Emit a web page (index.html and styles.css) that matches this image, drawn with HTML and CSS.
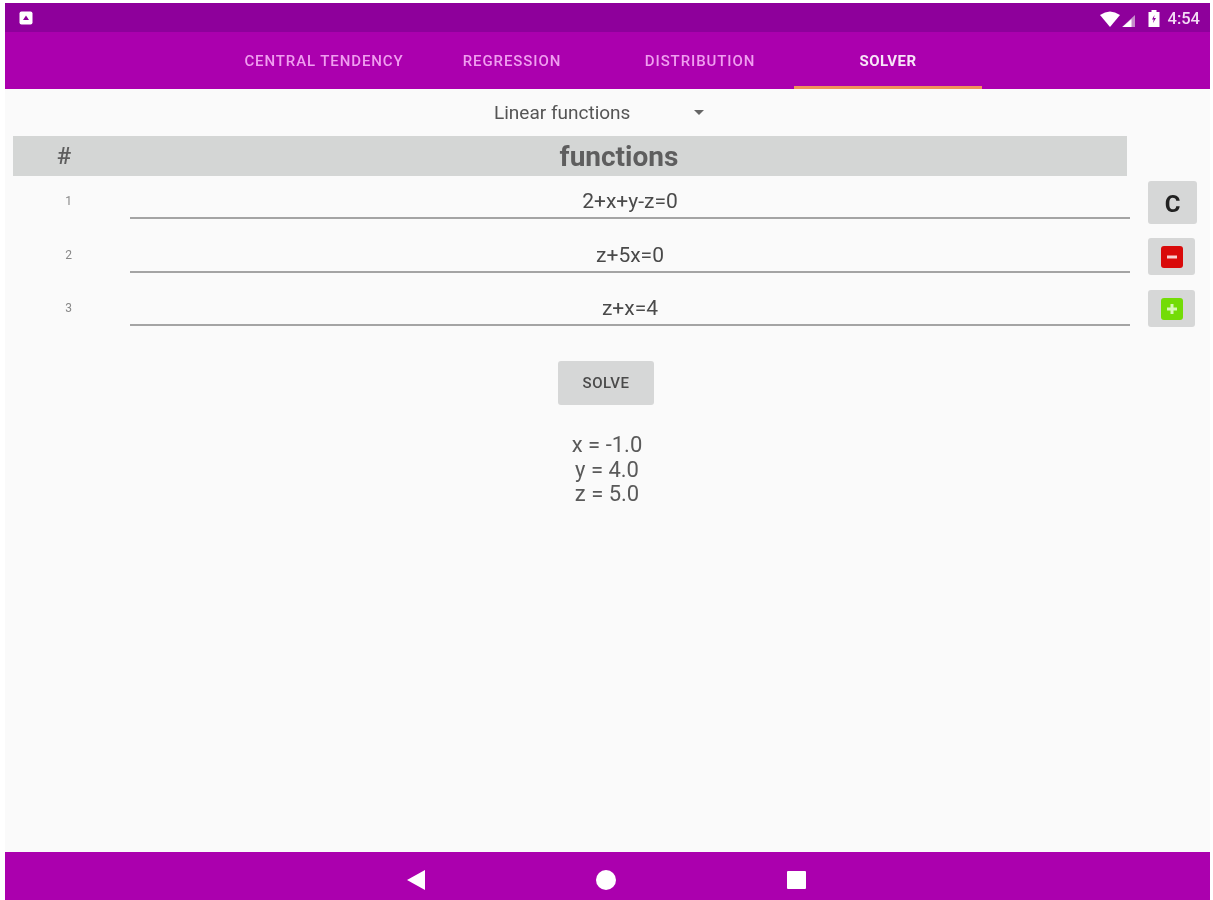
FILE: index.html
```html
<!DOCTYPE html>
<html lang="en">
<head>
<meta charset="utf-8">
<title>Solver</title>
<link rel="stylesheet" href="styles.css">
</head>
<body>
<div class="screen">
  <div class="status">
    <svg class="notif" width="14" height="14" viewBox="0 0 14 14"><rect x="0.5" y="0.5" width="13" height="13" rx="2" fill="#fff"/><path d="M7 4.500 10 9H4z" fill="#8e009b"/></svg>
    <div class="status-right">
      <svg class="wifi" width="20" height="16" viewBox="0 0 20 16"><path d="M0 4Q10-3 20 4L10 16z" fill="#fff"/></svg>
      <svg class="signal" width="13" height="12" viewBox="0 0 13 12"><path d="M13 0V12H0z" fill="#c58ccb"/><path d="M9.500 4V12H0.500z" fill="#fff"/></svg>
      <svg class="battery" width="12" height="17" viewBox="0 0 12 17"><path d="M3.500 0H8.500V2H11.500V17H.5V2H3.500z" fill="#fff"/><path d="M6.500 5 4 9.500H5.700L5 13 8 8H6z" fill="#8e009b"/></svg>
      <span class="time">4:54</span>
    </div>
  </div>
  <nav class="tabs">
    <div class="tab">CENTRAL TENDENCY</div>
    <div class="tab">REGRESSION</div>
    <div class="tab">DISTRIBUTION</div>
    <div class="tab active">SOLVER</div>
  </nav>
  <main class="content">
    <div class="spinner">
      <span class="spinner-label">Linear functions</span>
      <span class="caret"></span>
    </div>
    <div class="table-head">
      <div class="head-num">#</div>
      <div class="head-title">functions</div>
    </div>
    <div class="table-body">
      <div class="rows">
        <div class="row"><div class="num">1</div><div class="field">2+x+y-z=0</div></div>
        <div class="row"><div class="num">2</div><div class="field">z+5x=0</div></div>
        <div class="row"><div class="num">3</div><div class="field">z+x=4</div></div>
      </div>
      <div class="side">
        <button class="side-btn clear">C</button>
        <button class="side-btn small"><span class="ico red"><svg width="12" height="12" viewBox="0 0 12 12"><rect x="1" y="4.500" width="10" height="3" fill="#f7d0d0"/></svg></span></button>
        <button class="side-btn small"><span class="ico green"><svg width="12" height="12" viewBox="0 0 12 12"><path d="M4.500 1h3v3.500H11v3H7.500V11h-3V7.500H1v-3h3.500z" fill="#d8f7b8"/></svg></span></button>
      </div>
    </div>
    <button class="solve">SOLVE</button>
    <div class="results">
      <div>x = -1.0</div>
      <div>y = 4.0</div>
      <div>z = 5.0</div>
    </div>
  </main>
  <footer class="navbar">
    <svg width="18" height="20" viewBox="0 0 18 20"><path d="M0 10 18 0V20z" fill="#fff"/></svg>
    <svg width="20" height="20" viewBox="0 0 20 20"><circle cx="10" cy="10" r="10" fill="#fff"/></svg>
    <svg width="19" height="18" viewBox="0 0 19 18"><rect width="19" height="18" rx="1" fill="#fff"/></svg>
  </footer>
</div>
</body>
</html>
```
FILE: styles.css
```css
html, body {
  margin: 0;
  padding: 0;
  background: #fff;
}
body {
  width: 1213px;
  height: 900px;
  overflow: hidden;
  font-family: Roboto, "Liberation Sans", sans-serif;
}
.screen {
  margin: 3px 3px 0 5px;
  height: 897px;
  display: flex;
  flex-direction: column;
  background: #fafafa;
  filter: blur(0.7px);
}
.status {
  height: 29px;
  flex: none;
  background: #8e009b;
  display: flex;
  align-items: center;
  justify-content: space-between;
  padding: 0 10px 0 14px;
}
.status-right {
  display: flex;
  align-items: center;
  padding-top: 2px;
}
.wifi { margin-right: 2px; }
.signal { margin-right: 13px; margin-top: 5px; }
.battery { margin-right: 8px; }
.time {
  color: #f3dcf5;
  font-size: 16.500px;
  font-weight: 500;
}
.tabs {
  height: 57px;
  flex: none;
  background: #ab00ae;
  display: flex;
  padding-left: 225px;
}
.tab {
  width: 188px;
  box-sizing: border-box;
  display: flex;
  align-items: center;
  justify-content: center;
  color: #f09ef0;
  font-size: 15px;
  font-weight: 500;
  letter-spacing: 0.900px;
  white-space: nowrap;
}
.tab.active {
  color: #f8e4f8;
  font-weight: 700;
  letter-spacing: 0.500px;
  border-bottom: 3px solid #f0935a;
  padding-top: 3px;
}
.content {
  flex: 1;
  display: flex;
  flex-direction: column;
}
.spinner {
  height: 47px;
  flex: none;
  display: flex;
  align-items: center;
  padding-left: 489px;
}
.spinner-label {
  width: 200px;
  color: #555;
  font-size: 19px;
}
.caret {
  width: 0;
  height: 0;
  border-left: 5px solid transparent;
  border-right: 5px solid transparent;
  border-top: 5px solid #666;
}
.table-head {
  height: 40px;
  flex: none;
  margin-left: 8px;
  width: 1114px;
  background: #d4d6d5;
  display: flex;
  align-items: center;
  color: #5e5e5e;
}
.head-num {
  width: 102px;
  text-align: center;
  font-size: 24px;
  font-weight: 500;
}
.head-title {
  flex: 1;
  text-align: center;
  padding-right: 4px;
  font-size: 28px;
  font-weight: 700;
}
.table-body {
  display: flex;
  flex: none;
  margin-top: 1px;
}
.rows {
  width: 1125px;
  margin-left: 8px;
}
.row {
  display: flex;
  height: 53.500px;
  align-items: flex-start;
}
.row:first-child { height: 41px; margin-bottom: 12.500px; }
.num {
  width: 111px;
  flex: none;
  padding-top: 17px;
  text-align: center;
  color: #888;
  font-size: 12px;
}
.field {
  width: 1000px;
  margin-left: 6px;
  height: 40px;
  line-height: 48px;
  border-bottom: 2px solid #a4a4a4;
  text-align: center;
  color: #4a4a4a;
  font-size: 21px;
}
.side {
  width: 60px;
  padding-top: 4px;
  display: flex;
  flex-direction: column;
  margin-left: 10px;
}
.side-btn {
  border: 0;
  padding: 0;
  border-radius: 3px;
  background: #d6d7d7;
  display: flex;
  align-items: center;
  justify-content: center;
}
.clear {
  width: 49px;
  height: 43px;
  margin-bottom: 14px;
  padding-top: 2px;
  color: #222;
  font-family: Roboto, sans-serif;
  font-size: 24px;
  font-weight: 700;
}
.small {
  width: 47px;
  height: 37px;
  margin-bottom: 15px;
}
.ico {
  width: 22px;
  height: 22px;
  border-radius: 3px;
  display: flex;
  align-items: center;
  justify-content: center;
}
.red { background: #d90a0a; }
.green { background: #73dc06; }
.solve {
  align-self: flex-start;
  margin: 19px 0 0 553px;
  width: 96px;
  height: 44px;
  border: 0;
  border-radius: 3px;
  background: #d6d7d7;
  color: #4a4a4a;
  font-family: Roboto, sans-serif;
  font-size: 15px;
  font-weight: 500;
  letter-spacing: 0.500px;
}
.results {
  margin-top: 28px;
  padding-right: 1px;
  text-align: center;
  color: #5a5a5a;
  font-size: 22px;
  line-height: 24.500px;
}
.navbar {
  height: 48px;
  box-sizing: border-box;
  flex: none;
  background: #ab00ae;
  display: flex;
  align-items: center;
  justify-content: center;
  gap: 171px;
  padding: 8px 3px 0 0;
}
```
